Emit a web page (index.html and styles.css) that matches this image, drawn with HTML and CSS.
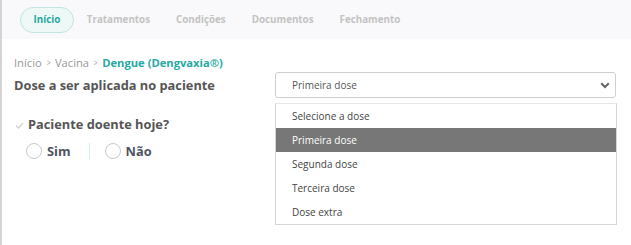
FILE: index.html
```html
<!DOCTYPE html>
<html lang="pt">
<head>
<meta charset="utf-8">
<link rel="stylesheet" href="styles.css">
</head>
<body>
<div class="page">
  <nav class="tabs">
    <span class="tab active">Início</span>
    <span class="tab">Tratamentos</span>
    <span class="tab">Condições</span>
    <span class="tab">Documentos</span>
    <span class="tab">Fechamento</span>
  </nav>
  <div class="content">
    <div class="crumbs">
      <span>Início</span><span class="sep">&gt;</span><span>Vacina</span><span class="sep">&gt;</span><span class="current">Dengue (Dengvaxia®)</span>
    </div>
    <div class="form">
      <div class="label">Dose a ser aplicada no paciente</div>
      <div class="select">
        <span>Primeira dose</span>
        <svg width="10" height="7" viewBox="0 0 10 7"><path d="M1.2 1.2 L5 5 L8.8 1.2" fill="none" stroke="#666" stroke-width="2"/></svg>
      </div>
      <div class="left">
        <div class="question">
          <svg class="check" width="9" height="7" viewBox="0 0 9 7"><path d="M1 3.5 L3.5 6 L8 1" fill="none" stroke="#d6d6d6" stroke-width="1.6"/></svg>
          <span>Paciente doente hoje?</span>
        </div>
        <div class="radios">
          <label class="radio"><span class="circle"></span>Sim</label>
          <span class="divider"></span>
          <label class="radio"><span class="circle"></span>Não</label>
        </div>
      </div>
      <ul class="options">
        <li>Selecione a dose</li>
        <li class="selected">Primeira dose</li>
        <li>Segunda dose</li>
        <li>Terceira dose</li>
        <li>Dose extra</li>
      </ul>
    </div>
  </div>
</div>
</body>
</html>
```
FILE: styles.css
```css
html, body { margin: 0; padding: 0; background: #fff; }
body { font-family: "Open Sans", "Noto Sans", sans-serif; color: #555; }
.page { border-left: 2px solid #d4d4d4; height: 245px; box-sizing: border-box; }
.tabs { background: #f9f9fb; height: 39px; display: flex; align-items: center; padding-left: 18px; box-sizing: border-box; }
.tab { font-size: 9.8px; font-weight: 700; color: #c3c3c3; padding: 0 13px; line-height: 24px; }
.tab.active { color: #26aaa1; background: #eef8f7; border: 1px solid #bfe6e2; border-radius: 13px; padding: 0 12.5px; }
.content { padding: 16px 15px 0 12px; }
.crumbs { font-size: 11.2px; color: #999; display: flex; align-items: center; line-height: 15px; }
.crumbs .sep { margin: 0 4px; font-size: 9px; color: #999; transform: scaleX(0.75); display: inline-block; }
.crumbs .current { color: #26aaa1; font-weight: 700; }
.form { display: grid; grid-template-columns: 261px 342px; align-items: start; margin-top: 2px; }
.label { font-size: 12.8px; font-weight: 700; color: #555; line-height: 18px; align-self: center; margin-top: -1px; }
.select { height: 26px; border: 1px solid #cfcfcf; border-radius: 3px; display: flex; align-items: center; justify-content: space-between; padding: 0 5px 0 16px; box-sizing: border-box; font-size: 10px; color: #555; width: 341px; }
.left { padding-top: 17px; }
.question { display: flex; align-items: center; font-size: 12.8px; font-weight: 700; line-height: 18px; }
.check { margin: 2px 4px 0 1px; }
.radios { display: flex; align-items: center; margin-top: 9px; padding-left: 12px; }
.radio { display: flex; align-items: center; font-size: 12.8px; font-weight: 700; color: #4e5561; }
.circle { width: 14px; height: 14px; border: 1px solid #c9c9c9; border-radius: 50%; margin-right: 5px; background: #fff; }
.divider { width: 1px; height: 16px; background: #d5ece9; margin: 0 15px 0 18px; }
.options { list-style: none; margin: 5px 0 0 0; padding: 0; border: 1px solid #d6d6d6; border-top-color: #e6e6e6; width: 342px; box-sizing: border-box; }
.options li { height: 24px; line-height: 24px; font-size: 10px; color: #444; padding-left: 16px; }
.options li.selected { background: #777; color: #fff; }
```
